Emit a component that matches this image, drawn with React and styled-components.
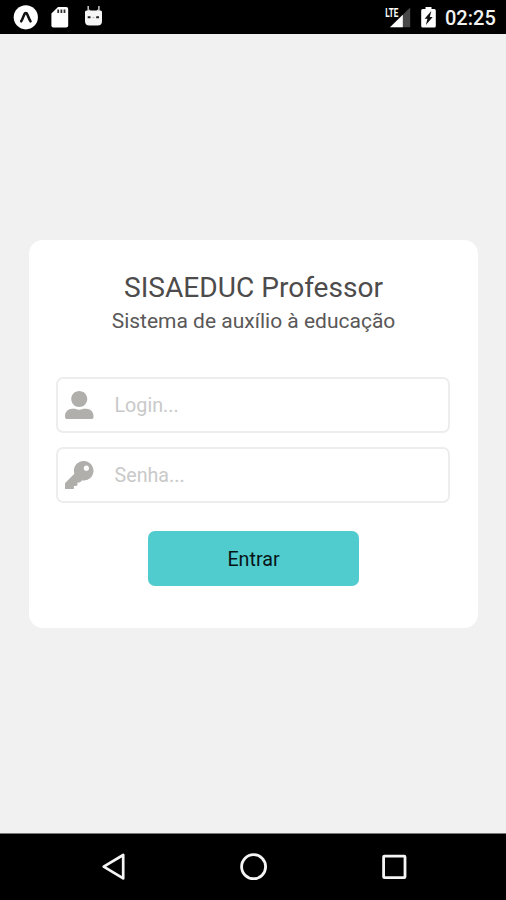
import React, { Component, Fragment } from "react";

import styled, { createGlobalStyle } from "styled-components";
import { FaUserAlt, FaKey } from "react-icons/fa";

const GlobalStyle = createGlobalStyle`
  * {
    box-sizing: border-box;
  }

  body {
    margin: 0;
    font-family: Roboto, "Liberation Sans", sans-serif;
    background: #f1f1f1;
  }
`;

const Screen = styled.div`
  display: flex;
  flex-direction: column;
  width: 100%;
  height: 100vh;
  background: #f1f1f1;
`;

const StatusBar = styled.header`
  display: flex;
  justify-content: space-between;
  align-items: flex-start;
  height: 34px;
  padding: 0 11px 0 12px;
  background: #000;
  flex-shrink: 0;
`;

const StatusGroup = styled.div`
  display: flex;
  height: 34px;
`;

const Battery = styled.div`
  margin-left: 9px;
`;

const Clock = styled.span`
  width: 50px;
  margin-left: 9px;
  color: #f2f2f2;
  font-size: 20px;
  font-weight: 500;
  line-height: 36px;
  white-space: nowrap;
`;

const Main = styled.main`
  display: flex;
  flex: 1;
  justify-content: center;
  align-items: center;
  padding: 1px 28px 0 29px;
`;

const Card = styled.form`
  display: flex;
  flex-direction: column;
  align-items: center;
  width: 449px;
  height: 388px;
  padding: 31px 27px 42px;
  border-radius: 14px;
  background: #fff;
`;

const Title = styled.h1`
  margin: 0;
  color: #4d4b4b;
  font-size: 28.1px;
  font-weight: 400;
  line-height: 34px;
  white-space: nowrap;
`;

const Subtitle = styled.p`
  margin: 0 0 39px;
  color: #5a5858;
  font-size: 21px;
  line-height: 33px;
  white-space: nowrap;
`;

const Field = styled.label`
  display: flex;
  align-items: center;
  width: 394px;
  height: 56px;
  margin: 0 1px 14px 0;
  padding-left: 7px;
  border: 2px solid #ededed;
  border-radius: 7px;
  color: #b0afac;
  flex-shrink: 0;
`;

const Input = styled.input`
  flex: 1;
  min-width: 0;
  margin-left: 21px;
  padding: 0;
  border: none;
  outline: none;
  background: transparent;
  color: #4d4b4b;
  font-family: inherit;
  font-size: 19.7px;

  &::placeholder {
    color: #c9c9c9;
    opacity: 1;
  }
`;

const LoginButton = styled.button`
  width: 211px;
  height: 55px;
  margin-top: 14px;
  padding: 2px 0 0;
  border: none;
  border-radius: 7px;
  background: #50cbce;
  color: #071416;
  font-family: inherit;
  font-size: 19.7px;
  flex-shrink: 0;
`;

const NavBar = styled.nav`
  display: flex;
  justify-content: space-between;
  height: 67px;
  padding: 18px 97px 0 98px;
  border-top: 1px solid #777;
  background: #000;
  flex-shrink: 0;
`;

const StatusIcons = () => (
  <svg width="94" height="34" viewBox="12 0 94 34">
    <circle cx="25.8" cy="17.3" r="12.1" fill="#fff" />
    <path
      d="M21.2 21.3c1.5-2 2.7-7 3.8-8 .5-.4 1.1-.4 1.6 0 1.1 1 2.4 6 3.9 8"
      fill="none"
      stroke="#111"
      strokeWidth="2.6"
      strokeLinecap="round"
    />
    <path
      d="M58 7h8.2q2 0 2 2v16.6q0 2-2 2H53.4q-2 0-2-2V13.5z"
      fill="#fff"
    />
    <path
      d="M58.2 9.5v3.6M61.4 9.5v3.6M64.5 9.5v3.6"
      stroke="#333"
      strokeWidth="1.8"
    />
    <path
      d="M88.2 6v5l2-.8M98.9 6v5l-2-.8"
      fill="none"
      stroke="#bbb"
      strokeWidth="1.6"
    />
    <path
      d="M85 12q0-1.500 1.500-1.500h14q1.500 0 1.500 1.500v9q0 4.500-4.500 4.500h-8q-4.500 0-4.500-4.500z"
      fill="#f5f5f5"
    />
    <path d="M87.7 17.2h2.800M96.200 17.2h2.800" stroke="#222" strokeWidth="2" />
    <path d="M92.3 17.6h2.200" stroke="#bbb" strokeWidth="1" />
  </svg>
);

const SignalIcon = () => (
  <svg width="28" height="34" viewBox="384 0 28 34">
    <path d="M410.2 7.5v19.7H390z" fill="#484848" />
    <path d="M402.8 14.7v12.5H390z" fill="#fff" />
    <text
      x="385.2"
      y="16.5"
      fill="#fff"
      fontFamily="Roboto, sans-serif"
      fontSize="13"
      fontWeight="700"
      textLength="13"
      lengthAdjust="spacingAndGlyphs"
    >
      LTE
    </text>
  </svg>
);

const BatteryIcon = () => (
  <svg width="15" height="34" viewBox="421 0 15 34">
    <path
      d="M425.5 7h6v2h2.7q1.6 0 1.6 1.6v15.4q0 1.6-1.6 1.6h-11.4q-1.6 0-1.6-1.6V10.600q0-1.600 1.600-1.600h2.700z"
      fill="#fff"
    />
    <path d="M431.3 11 424.6 18.8h2.8l-1.5 6.2 6.8-8h-2.900z" fill="#111" />
  </svg>
);

const BackIcon = () => (
  <svg width="30" height="30" viewBox="98 852 30 30">
    <path
      d="M123.2 855v23.4L103.7 866.7z"
      fill="none"
      stroke="#f5f5f5"
      strokeWidth="2.7"
      strokeLinejoin="round"
    />
  </svg>
);

const HomeIcon = () => (
  <svg width="30" height="30" viewBox="239 852 30 30">
    <circle
      cx="253.6"
      cy="866.7"
      r="12"
      fill="none"
      stroke="#f5f5f5"
      strokeWidth="2.8"
    />
  </svg>
);

const RecentIcon = () => (
  <svg width="30" height="30" viewBox="379 852 30 30">
    <rect
      x="383.6"
      y="856.2"
      width="21.4"
      height="21.4"
      rx=".8"
      fill="none"
      stroke="#f5f5f5"
      strokeWidth="2.8"
    />
  </svg>
);

class App extends Component {
  constructor(props) {
    super(props);
    this.state = {
      login: "",
      senha: ""
    };
  }

  changeHandler = e => {
    this.setState({
      [e.target.name]: e.target.value
    });
  };

  handleSubmit = e => {
    e.preventDefault();
  };

  render() {
    return (
      <Fragment>
        <GlobalStyle />
        <Screen>
          <StatusBar>
            <StatusIcons />
            <StatusGroup>
              <SignalIcon />
              <Battery>
                <BatteryIcon />
              </Battery>
              <Clock>02:25</Clock>
            </StatusGroup>
          </StatusBar>
          <Main>
            <Card onSubmit={this.handleSubmit}>
              <Title>SISAEDUC Professor</Title>
              <Subtitle>Sistema de auxílio à educação</Subtitle>
              <Field>
                <FaUserAlt size={28.5} />
                <Input
                  type="text"
                  name="login"
                  placeholder="Login..."
                  value={this.state.login}
                  onChange={this.changeHandler}
                />
              </Field>
              <Field>
                <FaKey size={28.5} />
                <Input
                  type="password"
                  name="senha"
                  placeholder="Senha..."
                  value={this.state.senha}
                  onChange={this.changeHandler}
                />
              </Field>
              <LoginButton type="submit">Entrar</LoginButton>
            </Card>
          </Main>
          <NavBar>
            <BackIcon />
            <HomeIcon />
            <RecentIcon />
          </NavBar>
        </Screen>
      </Fragment>
    );
  }
}

export default App;
